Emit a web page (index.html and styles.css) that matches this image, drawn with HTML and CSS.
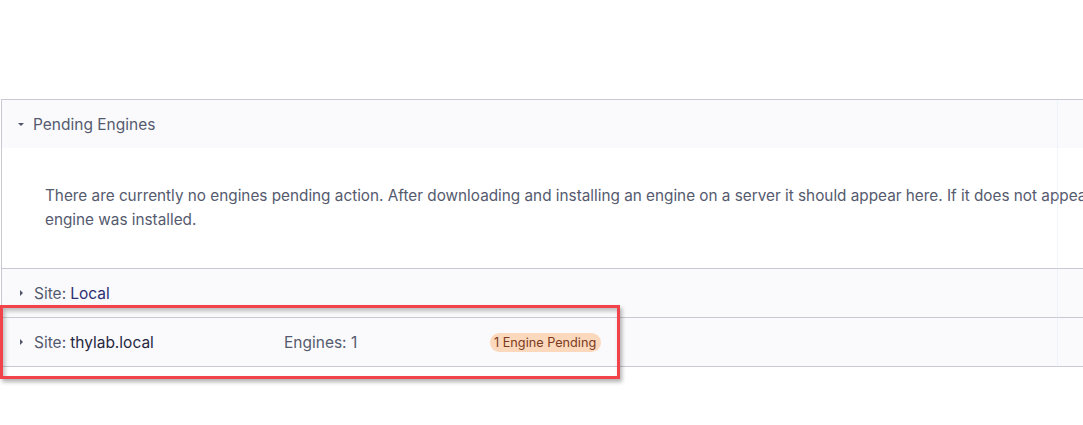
FILE: index.html
```html
<!DOCTYPE html>
<html lang="en">
<head>
<meta charset="utf-8">
<title>Engines</title>
<link rel="stylesheet" href="styles.css">
</head>
<body>
<div class="page">
  <section class="panel">
    <div class="group-head">
      <span class="caret caret-down"></span>
      <span class="head-title">Pending Engines</span>
    </div>
    <div class="group-body">
      <p class="empty-msg">There are currently no engines pending action. After downloading and installing an engine on a server it should appear here. If it does not appear, check the server the engine was installed on and confirm the</p>
      <p class="empty-msg">engine was installed.</p>
    </div>
    <div class="site-row">
      <div class="site-name"><span class="caret caret-right"></span><span class="lbl">Site:</span> <span class="val val-blue">Local</span></div>
    </div>
    <div class="site-row">
      <div class="site-name"><span class="caret caret-right"></span><span class="lbl">Site:</span> <span class="val">thylab.local</span></div>
      <div class="site-count">Engines: 1</div>
      <div class="site-status"><span class="badge">1 Engine Pending</span></div>
    </div>
    <div class="guide"></div>
  </section>
  <div class="highlight"></div>
</div>
</body>
</html>
```

FILE: styles.css
```css
html, body {
  margin: 0;
  padding: 0;
  background: #ffffff;
  overflow: hidden;
}

body {
  font-family: Inter, "Noto Sans", sans-serif;
  color: #555a6e;
  width: 1083px;
  height: 425px;
}

.page {
  position: relative;
  padding-top: 99px;
  padding-left: 1px;
  height: 326px;
}

.panel {
  position: relative;
  width: 1300px;
  border-top: 1px solid #c9c9d3;
  border-left: 1px solid #c9c9d3;
}

.group-head {
  height: 48px;
  background: #fafafd;
  display: flex;
  align-items: center;
  padding-left: 16px;
  font-size: 15.5px;
}

.caret {
  display: inline-block;
  width: 0;
  height: 0;
}

.caret-down {
  border-left: 3px solid transparent;
  border-right: 3px solid transparent;
  border-top: 3px solid #50556b;
  margin-right: 9px;
}

.caret-right {
  border-top: 3px solid transparent;
  border-bottom: 3px solid transparent;
  border-left: 3px solid #50556b;
  margin-left: 1px;
  margin-right: 11px;
}

.group-body {
  background: #ffffff;
  padding: 36px 0 36px 43px;
  border-bottom: 1px solid #c9c9d3;
}

.empty-msg {
  margin: 0;
  font-size: 15.3px;
  line-height: 24px;
  white-space: nowrap;
}

.site-row {
  height: 48px;
  background: #fafafd;
  border-bottom: 1px solid #c9c9d3;
  display: grid;
  grid-template-columns: 265px 206px auto;
  align-items: center;
  padding-left: 17px;
  font-size: 15.5px;
}

.site-name {
  display: flex;
  align-items: center;
}

.lbl {
  margin-right: 4px;
}

.val {
  color: #26283f;
}

.val-blue {
  color: #2b2f72;
}

.badge {
  display: inline-block;
  background: #fcd8bc;
  color: #7a3b20;
  font-size: 12.7px;
  line-height: 19px;
  padding: 0 5px 0 4px;
  border-radius: 10px;
}

.guide {
  position: absolute;
  left: 1055px;
  top: 0;
  bottom: 0;
  width: 1px;
  background: rgba(200, 235, 245, 0.35);
}

.highlight {
  position: absolute;
  left: 0;
  top: 305px;
  width: 614px;
  height: 68px;
  border: 3px solid #f2434b;
  box-shadow: 2px 3px 4px rgba(0, 0, 0, 0.3), inset 2px 3px 4px rgba(0, 0, 0, 0.25);
}
```
